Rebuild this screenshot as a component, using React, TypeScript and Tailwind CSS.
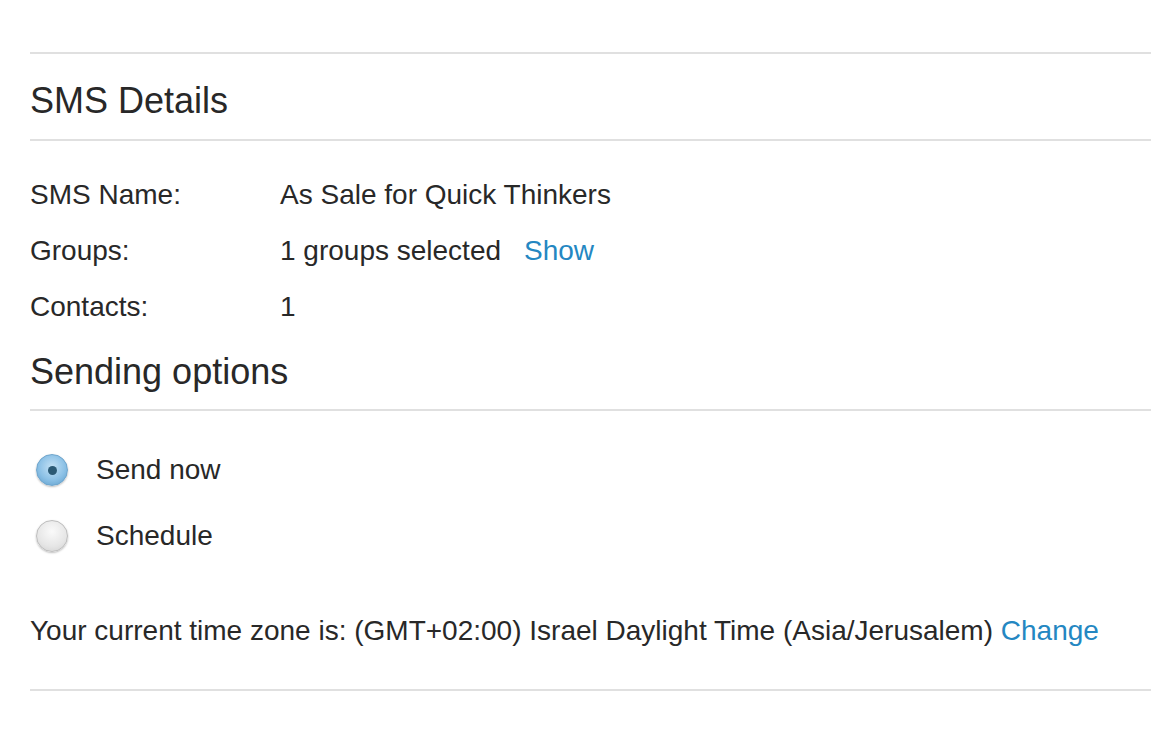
export default function App() {
  const rows = [
    { label: "SMS Name:", value: "As Sale for Quick Thinkers" },
    { label: "Groups:", value: "1 groups selected", link: "Show" },
    { label: "Contacts:", value: "1" },
  ];

  return (
    <div className="min-h-screen bg-white pl-[30px] pt-[52px] text-[#282828] font-['Liberation_Sans',Arial,sans-serif]">
      <div className="border-t-2 border-[#e0e0e0]" />

      {/* SMS details */}
      <h2 className="pt-[27px] pb-[18px] text-[36px] leading-[40px]">SMS Details</h2>
      <div className="border-t-2 border-[#e0e0e0]" />

      <div className="mt-[26px]">
        {rows.map((row) => (
          <div key={row.label} className="flex h-[56px] items-center text-[28px]">
            <div className="w-[250px]">{row.label}</div>
            <div>{row.value}</div>
            {row.link && <a className="ml-[23px] text-[#2487c2]">{row.link}</a>}
          </div>
        ))}
      </div>

      {/* Sending options */}
      <h2 className="mt-[17px] mb-[17px] text-[36px] leading-[40px]">Sending options</h2>
      <div className="border-t-2 border-[#e0e0e0]" />

      <div className="mt-[26px]">
        <label className="flex h-[66px] items-center text-[28px]">
          <span className="ml-[6px] flex h-[32px] w-[32px] items-center justify-center rounded-full border border-[#6fa5cc] bg-[radial-gradient(circle_at_50%_40%,#c3e1f5_0%,#8cc1e6_55%,#5b9bc9_100%)] shadow-[0_1px_2px_rgba(0,0,0,0.25)]">
            <span className="h-[9px] w-[9px] rounded-full bg-[#2b5a75]" />
          </span>
          <span className="ml-[28px]">Send now</span>
        </label>
        <label className="flex h-[66px] items-center text-[28px]">
          <span className="ml-[6px] h-[32px] w-[32px] rounded-full border border-[#bdbdbd] bg-[radial-gradient(circle_at_50%_35%,#fafafa_0%,#e6e6e6_60%,#cfcfcf_100%)] shadow-[0_1px_2px_rgba(0,0,0,0.25)]" />
          <span className="ml-[28px]">Schedule</span>
        </label>
      </div>

      <p className="mt-[42px] mb-[38px] text-[28px] leading-[40px]">
        Your current time zone is: (GMT+02:00) Israel Daylight Time (Asia/Jerusalem){" "}
        <a className="text-[#2487c2]">Change</a>
      </p>
      <div className="border-t-2 border-[#e0e0e0]" />
    </div>
  );
}
